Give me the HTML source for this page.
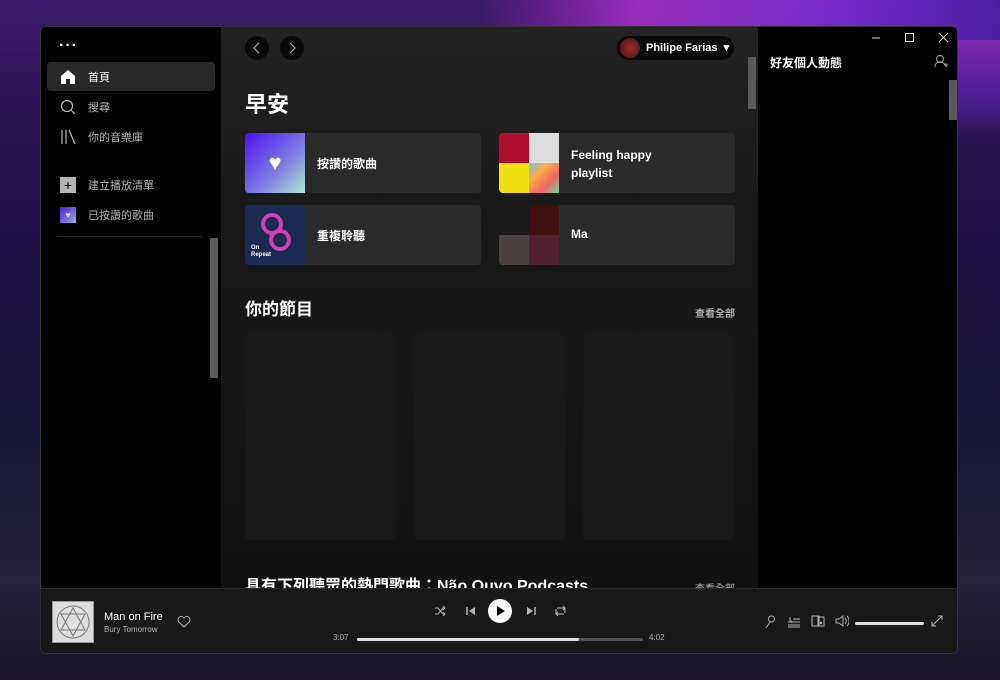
<!DOCTYPE html>
<html><head><meta charset="utf-8"><style>
*{margin:0;padding:0;box-sizing:border-box}
body{width:1000px;height:680px;overflow:hidden;position:relative;font-family:"Liberation Sans","Noto Sans CJK TC",sans-serif;color:#fff;
background:linear-gradient(180deg,#3a1a6a 0%,#2a1450 18%,#1c1240 40%,#1a1838 65%,#262238 85%,#1a1628 100%);}
.neon{position:absolute;top:0;left:480px;width:520px;height:40px;background:linear-gradient(90deg,rgba(160,32,192,0),#b030d0 30%,#8030e0 70%,#5020b0);opacity:.8}
.neon2{position:absolute;top:40px;left:958px;width:42px;height:100px;background:linear-gradient(180deg,#9030c0,#5020a0 60%,rgba(40,20,80,0));opacity:.8}
.win{position:absolute;left:40px;top:26px;width:918px;height:628px;background:#000;border-radius:6px;overflow:hidden;border:1px solid #333}
.side{position:absolute;left:0;top:0;width:180px;height:561px;background:#000}
.main{position:absolute;left:180px;top:0;width:537px;height:561px;background:linear-gradient(180deg,#222 0%,#181818 40%,#121212 100%);overflow:hidden}
.right{position:absolute;left:717px;top:0;width:201px;height:561px;background:#000}
.player{position:absolute;left:0;top:561px;width:918px;height:67px;background:#181818;border-top:1px solid #282828}
.nav{position:absolute;left:6px;width:168px;height:29px;border-radius:4px;font-size:11px;display:flex;align-items:center;padding-left:41px;color:#b3b3b3}
.nav.on{background:#282828;color:#fff}
.ico{position:absolute;left:13px}
.tile{position:absolute;width:236px;height:60px;background:#2a2a2a;border-radius:4px;overflow:hidden}
.tile .art{position:absolute;left:0;top:0;width:60px;height:60px}
.tile .t{position:absolute;left:72px;font-size:12px;font-weight:bold}
.card{position:absolute;top:305px;width:151px;height:208px;background:#181818;border-radius:4px}
.scroll{position:absolute;background:#5a5a5a}
svg.a{position:absolute}
</style></head><body>
<div class="neon"></div><div class="neon2"></div>
<div class="win">
 <div class="side">
  <div style="position:absolute;left:18px;top:10px;font-size:16px;letter-spacing:1px;font-weight:bold">···</div>
  <div class="nav on" style="top:35px"><svg class="ico" width="16" height="16" viewBox="0 0 16 16"><path d="M8 1L1 7v8h5v-5h4v5h5V7z" fill="#fff"/></svg>首頁</div>
  <div class="nav" style="top:65px"><svg class="ico" width="16" height="16" viewBox="0 0 16 16"><circle cx="7" cy="7" r="5.5" stroke="#bbb" fill="none" stroke-width="1.2"/><path d="M11 11l4 4" stroke="#bbb" stroke-width="1.2"/></svg>搜尋</div>
  <div class="nav" style="top:95px"><svg class="ico" width="16" height="16" viewBox="0 0 16 16"><path d="M2 1v14M6 1v14M9 1l6 14" stroke="#bbb" stroke-width="1.2" fill="none"/></svg>你的音樂庫</div>
  <div class="nav" style="top:143px;color:#b3b3b3"><div class="ico" style="width:16px;height:16px;background:#b3b3b3;color:#000;font-size:14px;line-height:16px;text-align:center">+</div>建立播放清單</div>
  <div class="nav" style="top:173px"><div class="ico" style="width:16px;height:16px;background:linear-gradient(135deg,#4a1ae0,#9ad);font-size:9px;line-height:16px;text-align:center;color:#ddd">♥</div>已按讚的歌曲</div>
  <div style="position:absolute;left:16px;top:209px;width:146px;height:1px;background:#282828"></div>
  <div class="scroll" style="left:169px;top:211px;width:8px;height:140px"></div>
 </div>
 <div class="main">
  <div style="position:absolute;left:24px;top:9px;width:24px;height:24px;border-radius:50%;background:#0a0a0a"><svg width="24" height="24"><path d="M14 7l-5 5 5 5" stroke="#aaa" fill="none" stroke-width="1.2"/></svg></div>
  <div style="position:absolute;left:59px;top:9px;width:24px;height:24px;border-radius:50%;background:#0a0a0a"><svg width="24" height="24"><path d="M10 7l5 5-5 5" stroke="#aaa" fill="none" stroke-width="1.2"/></svg></div>
  <div style="position:absolute;left:396px;top:9px;width:117px;height:24px;border-radius:12px;background:#0a0a0a;font-size:11px;font-weight:bold;line-height:24px;padding-left:29px">Philipe Farias &nbsp;▾<div style="position:absolute;left:3px;top:2px;width:20px;height:20px;border-radius:50%;background:radial-gradient(#a03030,#3a1010)"></div></div>
  <div style="position:absolute;left:24px;top:60px;font-size:22px;font-weight:bold">早安</div>
  <div class="tile" style="left:24px;top:106px"><div class="art" style="background:linear-gradient(135deg,#4a10f0,#8080e0 60%,#b0e8d0);text-align:center;line-height:60px;font-size:22px">♥</div><div class="t" style="top:22px">按讚的歌曲</div></div>
  <div class="tile" style="left:278px;top:106px"><div class="art"><div style="position:absolute;left:0;top:0;width:30px;height:30px;background:#b01030"></div><div style="position:absolute;left:30px;top:0;width:30px;height:30px;background:#ddd"></div><div style="position:absolute;left:0;top:30px;width:30px;height:30px;background:#f0e010"></div><div style="position:absolute;left:30px;top:30px;width:30px;height:30px;background:linear-gradient(135deg,#6cd,#fa4,#e66,#6d8)"></div></div><div class="t" style="top:13px;line-height:18px">Feeling happy<br>playlist</div></div>
  <div class="tile" style="left:24px;top:178px"><div class="art" style="background:#1a2a50"><div style="position:absolute;left:16px;top:8px;width:22px;height:22px;border:4px solid #d040b0;border-radius:50%"></div><div style="position:absolute;left:24px;top:24px;width:22px;height:22px;border:4px solid #d040b0;border-radius:50%"></div><div style="position:absolute;left:6px;top:40px;font-size:6px;font-weight:bold;line-height:7px">On<br>Repeat</div></div><div class="t" style="top:22px">重複聆聽</div></div>
  <div class="tile" style="left:278px;top:178px"><div class="art" style="background:#1a1a1a"><div style="position:absolute;left:30px;top:0;width:30px;height:30px;background:#401010"></div><div style="position:absolute;left:0;top:30px;width:30px;height:30px;background:#4a4040"></div><div style="position:absolute;left:30px;top:30px;width:30px;height:30px;background:#502030"></div></div><div class="t" style="top:22px">Ma</div></div>
  <div style="position:absolute;left:24px;top:268px;font-size:17px;font-weight:bold">你的節目</div>
  <div style="position:absolute;left:474px;top:278px;font-size:10px;color:#b3b3b3;font-weight:bold">查看全部</div>
  <div class="card" style="left:24px"></div><div class="card" style="left:193px"></div><div class="card" style="left:362px"></div>
  <div style="position:absolute;left:24px;top:545px;font-size:16px;font-weight:bold;white-space:nowrap">具有下列聽眾的熱門歌曲：Não Ouvo Podcasts</div>
  <div style="position:absolute;left:474px;top:553px;font-size:10px;color:#b3b3b3">查看全部</div>
  <div class="scroll" style="left:527px;top:30px;width:8px;height:52px"></div>
 </div>
 <div class="right">
  <svg class="a" style="left:110px;top:4px" width="90" height="14"><path d="M4 7h8" stroke="#ddd"/><rect x="37.5" y="2.5" width="8" height="8" fill="none" stroke="#ddd"/><path d="M71 2l9 9M80 2l-9 9" stroke="#ddd"/></svg>
  <div style="position:absolute;left:12px;top:27px;font-size:12px;font-weight:bold">好友個人動態</div>
  <svg class="a" style="left:176px;top:27px" width="14" height="14"><circle cx="6" cy="5" r="3.5" fill="none" stroke="#aaa"/><path d="M1 13c0-4 3-5 5-5s4 1 5 3M10 11h4M12 9v4" fill="none" stroke="#aaa"/></svg>
  <div class="scroll" style="left:191px;top:53px;width:8px;height:40px"></div>
 </div>
 <div class="player">
  <div style="position:absolute;left:11px;top:12px;width:42px;height:42px;background:#ddd;border:1px solid #999"><svg width="40" height="40" viewBox="0 0 40 40"><circle cx="20" cy="20" r="16" fill="none" stroke="#777"/><path d="M8 12h24L20 34zM8 28h24L20 6z" fill="none" stroke="#777"/></svg></div>
  <div style="position:absolute;left:63px;top:22px;font-size:11px">Man on Fire</div>
  <div style="position:absolute;left:63px;top:36px;font-size:8px;color:#b3b3b3">Bury Tomorrow</div>
  <svg class="a" style="left:136px;top:26px" width="14" height="13"><path d="M7 12L1.5 6.5A3 3 0 0 1 7 3a3 3 0 0 1 5.5 3.5z" fill="none" stroke="#b3b3b3"/></svg>
  <svg class="a" style="left:393px;top:16px" width="12" height="12"><path d="M1 3h3l5 6h2M1 9h3l5-6h2M9 1l2 2-2 2M9 7l2 2-2 2" fill="none" stroke="#b3b3b3"/></svg>
  <svg class="a" style="left:425px;top:17px" width="10" height="10"><path d="M1 1v8" stroke="#b3b3b3" stroke-width="1.5"/><path d="M9 1L3 5l6 4z" fill="#b3b3b3"/></svg>
  <div style="position:absolute;left:447px;top:10px;width:24px;height:24px;border-radius:50%;background:#fff"><svg width="24" height="24"><path d="M9 7l8 5-8 5z" fill="#000"/></svg></div>
  <svg class="a" style="left:485px;top:17px" width="10" height="10"><path d="M9 1v8" stroke="#b3b3b3" stroke-width="1.5"/><path d="M1 1l6 4-6 4z" fill="#b3b3b3"/></svg>
  <svg class="a" style="left:513px;top:16px" width="13" height="12"><path d="M3 3h8v5M10 9H2V4M9 1l2 2-2 2M4 7L2 9l2 2" fill="none" stroke="#b3b3b3"/></svg>
  <div style="position:absolute;left:292px;top:44px;font-size:8px;color:#b3b3b3">3:07</div>
  <div style="position:absolute;left:316px;top:49px;width:286px;height:3px;border-radius:2px;background:#535353"><div style="width:222px;height:3px;background:#ddd;border-radius:2px"></div></div>
  <div style="position:absolute;left:608px;top:44px;font-size:8px;color:#b3b3b3">4:02</div>
  <svg class="a" style="left:723px;top:26px" width="12" height="14"><circle cx="7.5" cy="4" r="3" fill="none" stroke="#b3b3b3"/><path d="M6 7l-4 6" stroke="#b3b3b3"/></svg>
  <svg class="a" style="left:746px;top:27px" width="14" height="12"><path d="M3 1v5l2-1M1 6h12M1 9h12M1 11h12M6 3h7" fill="none" stroke="#b3b3b3"/></svg>
  <svg class="a" style="left:770px;top:26px" width="14" height="12"><rect x="1" y="1" width="7" height="10" fill="none" stroke="#b3b3b3"/><rect x="7" y="2" width="6" height="9" fill="none" stroke="#b3b3b3"/><circle cx="10" cy="8" r="1.2" fill="#b3b3b3"/></svg>
  <svg class="a" style="left:794px;top:26px" width="14" height="12"><path d="M1 4h3l4-3v10L4 8H1z" fill="none" stroke="#b3b3b3"/><path d="M10 3a4 4 0 0 1 0 6M12 1a7 7 0 0 1 0 10" fill="none" stroke="#b3b3b3"/></svg>
  <div style="position:absolute;left:814px;top:33px;width:69px;height:3px;background:#ddd;border-radius:2px"></div>
  <svg class="a" style="left:890px;top:26px" width="12" height="12"><path d="M1 11L11 1M7 1h4v4M1 7v4h4" fill="none" stroke="#b3b3b3"/></svg>
 </div>
</div>
</body></html>
